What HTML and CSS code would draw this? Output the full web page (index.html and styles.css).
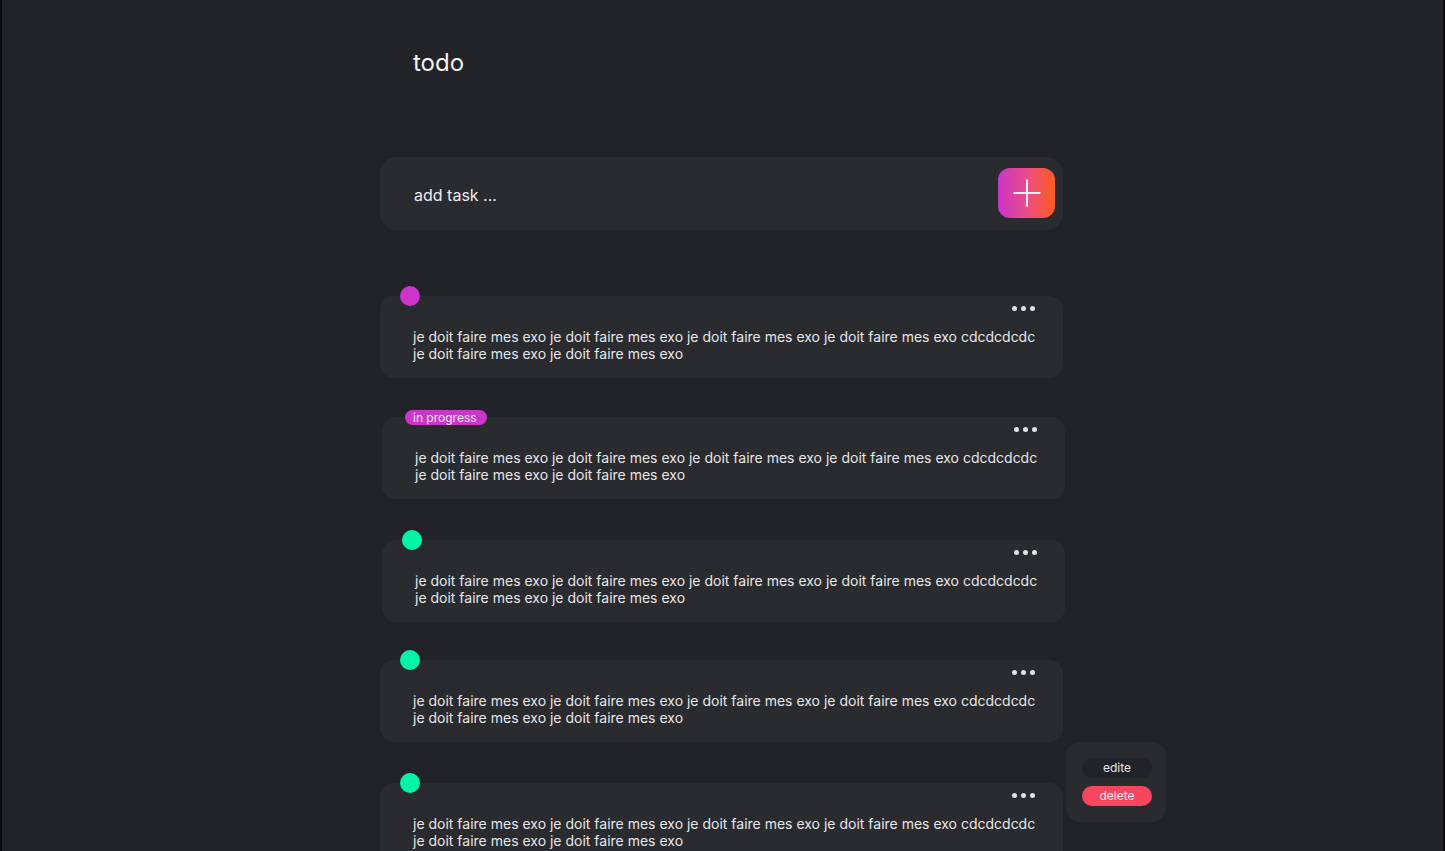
FILE: index.html
```html
<!DOCTYPE html>
<html lang="fr">
<head>
<meta charset="utf-8">
<title>todo</title>
<link rel="stylesheet" href="styles.css">
</head>
<body>
<div class="page">
  <main class="column">
    <h1 class="title">todo</h1>

    <div class="add-box">
      <span class="add-placeholder">add task ...</span>
      <button class="add-btn" aria-label="add">
        <svg width="28" height="28" viewBox="0 0 28 28"><line x1="14" y1="0.5" x2="14" y2="27.5" stroke="#fff" stroke-width="2"/><line x1="0.5" y1="14" x2="27.5" y2="14" stroke="#fff" stroke-width="2"/></svg>
      </button>
    </div>

    <ul class="tasks">
      <li class="card">
        <span class="dot dot-pink"></span>
        <div class="card-top"><span class="more"><i></i><i></i><i></i></span></div>
        <p class="card-text">je doit faire mes exo je doit faire mes exo je doit faire mes exo je doit faire mes exo cdcdcdcdc je doit faire mes exo je doit faire mes exo</p>
      </li>
      <li class="card shift">
        <span class="badge">in progress</span>
        <div class="card-top"><span class="more"><i></i><i></i><i></i></span></div>
        <p class="card-text">je doit faire mes exo je doit faire mes exo je doit faire mes exo je doit faire mes exo cdcdcdcdc je doit faire mes exo je doit faire mes exo</p>
      </li>
      <li class="card shift">
        <span class="dot dot-green"></span>
        <div class="card-top"><span class="more"><i></i><i></i><i></i></span></div>
        <p class="card-text">je doit faire mes exo je doit faire mes exo je doit faire mes exo je doit faire mes exo cdcdcdcdc je doit faire mes exo je doit faire mes exo</p>
      </li>
      <li class="card">
        <span class="dot dot-green"></span>
        <div class="card-top"><span class="more"><i></i><i></i><i></i></span></div>
        <p class="card-text">je doit faire mes exo je doit faire mes exo je doit faire mes exo je doit faire mes exo cdcdcdcdc je doit faire mes exo je doit faire mes exo</p>
      </li>
      <li class="card">
        <span class="dot dot-green"></span>
        <div class="card-top"><span class="more"><i></i><i></i><i></i></span></div>
        <p class="card-text">je doit faire mes exo je doit faire mes exo je doit faire mes exo je doit faire mes exo cdcdcdcdc je doit faire mes exo je doit faire mes exo</p>
        <div class="menu">
          <button class="menu-btn menu-edit">edite</button>
          <button class="menu-btn menu-delete">delete</button>
        </div>
      </li>
    </ul>
  </main>
</div>
</body>
</html>
```

FILE: styles.css
```css
html, body {
  margin: 0;
  padding: 0;
  background: #0c0c0d;
  height: 100%;
  overflow: hidden;
}

body {
  font-family: Inter, "Noto Sans", sans-serif;
  color: #e8e8ea;
}

.page {
  margin: 0 2px;
  min-height: 100%;
  background: #212328;
}

.column {
  width: 683px;
  margin-left: calc(50% - 342.5px);
  padding-top: 48px;
}

.title {
  margin: 0 0 80px 33px;
  font-size: 24px;
  line-height: 29px;
  font-weight: 400;
  color: #f2f2f3;
}

.add-box {
  height: 73px;
  box-sizing: border-box;
  background: #2a2b2f;
  border-radius: 16px;
  display: flex;
  align-items: center;
  justify-content: space-between;
  padding: 0 8px 0 34px;
}

.add-placeholder {
  font-size: 16px;
  line-height: 19px;
  color: #ececee;
  margin-top: 3px;
}

.add-btn {
  width: 57px;
  height: 50px;
  border: 0;
  border-radius: 12px;
  background: linear-gradient(90deg, #c935c8 0%, #ea4c8a 50%, #ff5b1c 100%);
  display: flex;
  align-items: center;
  justify-content: center;
  padding: 0;
  margin-top: -1px;
}

.add-btn svg {
  opacity: 0.92;
}

.tasks {
  list-style: none;
  margin: 66px 0 0;
  padding: 0;
  display: flex;
  flex-direction: column;
  gap: 40px;
}

.card {
  position: relative;
  background: #2a2b2f;
  border-radius: 14px;
  padding: 10px 20px 16px 33px;
  height: 82px;
  box-sizing: border-box;
}

.card:nth-child(2) { margin-top: -1px; }
.card:nth-child(3) { margin-top: 1px; }
.card:nth-child(4) { margin-top: -2px; }
.card:nth-child(5) { margin-top: 1px; }

.card.shift {
  margin-left: 2px;
  margin-right: -2px;
}

.card-top {
  display: flex;
  justify-content: flex-end;
  padding-right: 8px;
  height: 5px;
}

.more {
  display: flex;
  gap: 4px;
}

.more i {
  width: 5px;
  height: 5px;
  border-radius: 50%;
  background: #e2e2e4;
}

.card-text {
  margin: 17px 0 0;
  font-size: 14px;
  line-height: 17px;
  color: #e6e6e8;
}

.dot {
  position: absolute;
  left: 20px;
  top: -10px;
  width: 20px;
  height: 20px;
  border-radius: 50%;
}

.dot-pink {
  background: #cb35c9;
}

.dot-green {
  background: #00f5a6;
}

.badge {
  position: absolute;
  left: 23px;
  top: -7px;
  height: 15px;
  line-height: 15px;
  padding: 0 10px 0 8px;
  border-radius: 8px;
  background: #cb35c9;
  color: #fbeffb;
  font-size: 12px;
}

.menu {
  position: absolute;
  left: calc(100% + 3px);
  top: -41px;
  width: 100px;
  box-sizing: border-box;
  padding: 16px;
  background: #2a2b2f;
  border-radius: 14px;
  display: flex;
  flex-direction: column;
  gap: 8px;
}

.menu-btn {
  width: 70px;
  height: 20px;
  border: 0;
  border-radius: 10px;
  padding: 0;
  font-family: Inter, "Noto Sans", sans-serif;
  font-size: 12px;
  line-height: 20px;
}

.menu-edit {
  background: #212328;
  color: #e6e6e8;
}

.menu-delete {
  background: #f6475f;
  color: #fde8eb;
}
```
